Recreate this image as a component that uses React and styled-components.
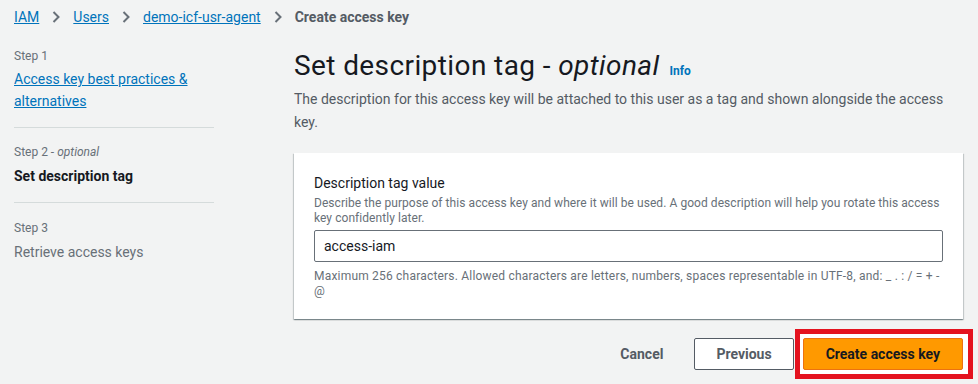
import styled, { createGlobalStyle } from "styled-components";

const ink = "#16191f";
const grey = "#545b64";
const muted = "#687078";
const link = "#0073bb";
const line = "#d5dbdb";

const GlobalStyle = createGlobalStyle`
  body {
    margin: 0;
    background: #f2f3f3;
    font-family: Roboto, "Liberation Sans", Arial, sans-serif;
    color: ${ink};
  }
`;

const Chevron = () => (
  <svg width="10" height="14" viewBox="0 0 10 14" fill="none">
    <path d="M2.5 2 L7.5 7 L2.5 12" stroke="#687078" strokeWidth="2" />
  </svg>
);

const App = () => {
  const crumbs = ["IAM", "Users", "demo-icf-usr-agent"];

  return (
    <Page>
      <GlobalStyle />
      <Breadcrumbs>
        {crumbs.map((c) => (
          <Crumb key={c}>
            <CrumbLink href="#">{c}</CrumbLink>
            <Chevron />
          </Crumb>
        ))}
        <Current>Create access key</Current>
      </Breadcrumbs>

      <Body>
        <Steps>
          <StepItem>
            <StepLabel>Step 1</StepLabel>
            <StepLink href="#">Access key best practices &amp; alternatives</StepLink>
          </StepItem>
          <StepItem>
            <StepLabel>
              Step 2 - <em>optional</em>
            </StepLabel>
            <StepTitle $active>Set description tag</StepTitle>
          </StepItem>
          <StepItem $last>
            <StepLabel>Step 3</StepLabel>
            <StepTitle>Retrieve access keys</StepTitle>
          </StepItem>
        </Steps>

        <Main>
          <Title>
            <span>
              Set description tag - <em>optional</em>
            </span>
            <Info href="#">Info</Info>
          </Title>
          <Lead>
            The description for this access key will be attached to this user as a tag and shown
            alongside the access key.
          </Lead>

          <Panel>
            <FieldLabel>Description tag value</FieldLabel>
            <FieldHint>
              Describe the purpose of this access key and where it will be used. A good description
              will help you rotate this access key confidently later.
            </FieldHint>
            <Input defaultValue="access-iam" />
            <FieldHint $below>
              Maximum 256 characters. Allowed characters are letters, numbers, spaces representable
              in UTF-8, and: _ . : / = + - @
            </FieldHint>
          </Panel>

          <Actions>
            <TextButton>Cancel</TextButton>
            <NormalButton>Previous</NormalButton>
            <Highlight>
              <PrimaryButton>Create access key</PrimaryButton>
            </Highlight>
          </Actions>
        </Main>
      </Body>
    </Page>
  );
};

export default App;

const Page = styled.div`
  padding: 0 15px 0 14px;
`;

const Breadcrumbs = styled.nav`
  display: flex;
  align-items: center;
  height: 34px;
  margin-bottom: 14px;
  font-size: 14px;
`;

const Crumb = styled.span`
  display: flex;
  align-items: center;
  gap: 12px;
  margin-right: 12px;
`;

const CrumbLink = styled.a`
  color: ${link};
  text-decoration: underline;
`;

const Current = styled.span`
  color: ${grey};
  font-weight: 700;
`;

const Body = styled.div`
  display: grid;
  grid-template-columns: 200px 1fr;
  column-gap: 80px;
`;

const Steps = styled.ol`
  list-style: none;
  margin: 0;
  padding: 0;
`;

const StepItem = styled.li`
  display: flex;
  flex-direction: column;
  gap: 5px;
  padding: ${(p) => (p.$last ? "17px 0 0" : "16px 0 15px")};
  border-bottom: ${(p) => (p.$last ? "none" : `1px solid ${line}`)};

  &:first-child {
    padding-top: 0;
  }
`;

const StepLabel = styled.span`
  font-size: 12px;
  line-height: 16px;
  color: ${muted};

  em {
    font-style: italic;
  }
`;

const StepLink = styled.a`
  margin-top: -1px;
  font-size: 14px;
  line-height: 22px;
  color: ${link};
  text-decoration: underline;
`;

const StepTitle = styled.span`
  font-size: 14px;
  line-height: 22px;
  color: ${(p) => (p.$active ? ink : muted)};
  font-weight: ${(p) => (p.$active ? 700 : 400)};
`;

const Main = styled.main`
  display: flex;
  flex-direction: column;
`;

const Title = styled.h1`
  display: flex;
  align-items: baseline;
  margin: 0;
  font-size: 28px;
  line-height: 36px;
  font-weight: 400;
  letter-spacing: 0.4px;
  color: ${ink};
`;

const Info = styled.a`
  margin-left: 10px;
  font-size: 12px;
  line-height: 16px;
  letter-spacing: 0;
  font-weight: 700;
  color: ${link};
  text-decoration: none;
`;

const Lead = styled.p`
  margin: 4px 0 0;
  font-size: 14px;
  line-height: 23px;
  color: ${grey};
`;

const Panel = styled.section`
  margin-top: 19px;
  padding: 19px 20px 20px;
  background: #fff;
  box-shadow: 0 1px 1px 0 rgba(0, 28, 36, 0.3), 1px 1px 1px 0 rgba(0, 28, 36, 0.15),
    -1px 1px 1px 0 rgba(0, 28, 36, 0.15);
`;

const FieldLabel = styled.div`
  font-size: 14px;
  line-height: 22px;
  color: ${ink};
`;

const FieldHint = styled.div`
  margin-top: ${(p) => (p.$below ? "7px" : "2px")};
  margin-bottom: ${(p) => (p.$below ? "0" : "4px")};
  font-size: 12px;
  line-height: 15px;
  letter-spacing: ${(p) => (p.$below ? "0.2px" : "0.06px")};
  color: ${muted};
`;

const Input = styled.input`
  box-sizing: border-box;
  width: 100%;
  height: 32px;
  padding: 0 9px;
  border: 1px solid #687078;
  border-radius: 2px;
  font-family: inherit;
  font-size: 14px;
  color: ${ink};
  outline: none;
`;

const Actions = styled.div`
  display: flex;
  align-items: center;
  justify-content: flex-end;
  margin-top: 10px;
  margin-right: -10px;
`;

const BaseButton = styled.button`
  box-sizing: border-box;
  height: 32px;
  padding: 0 21px;
  border-radius: 2px;
  font-family: inherit;
  font-size: 14px;
  font-weight: 700;
  cursor: pointer;
`;

const TextButton = styled(BaseButton)`
  padding: 0 20px;
  background: transparent;
  border: 1px solid transparent;
  color: ${grey};
  margin-right: 10px;
`;

const NormalButton = styled(BaseButton)`
  background: #fff;
  border: 1px solid ${grey};
  color: ${grey};
  margin-right: 1px;
`;

const PrimaryButton = styled(BaseButton)`
  display: block;
  padding: 0 22px;
  background: #ff9900;
  border: 1px solid #ec7211;
  color: ${ink};
`;

const Highlight = styled.div`
  padding: 4px 5px 4px 3px;
  border: 5px solid #e4121f;
  background: #fff;
`;
